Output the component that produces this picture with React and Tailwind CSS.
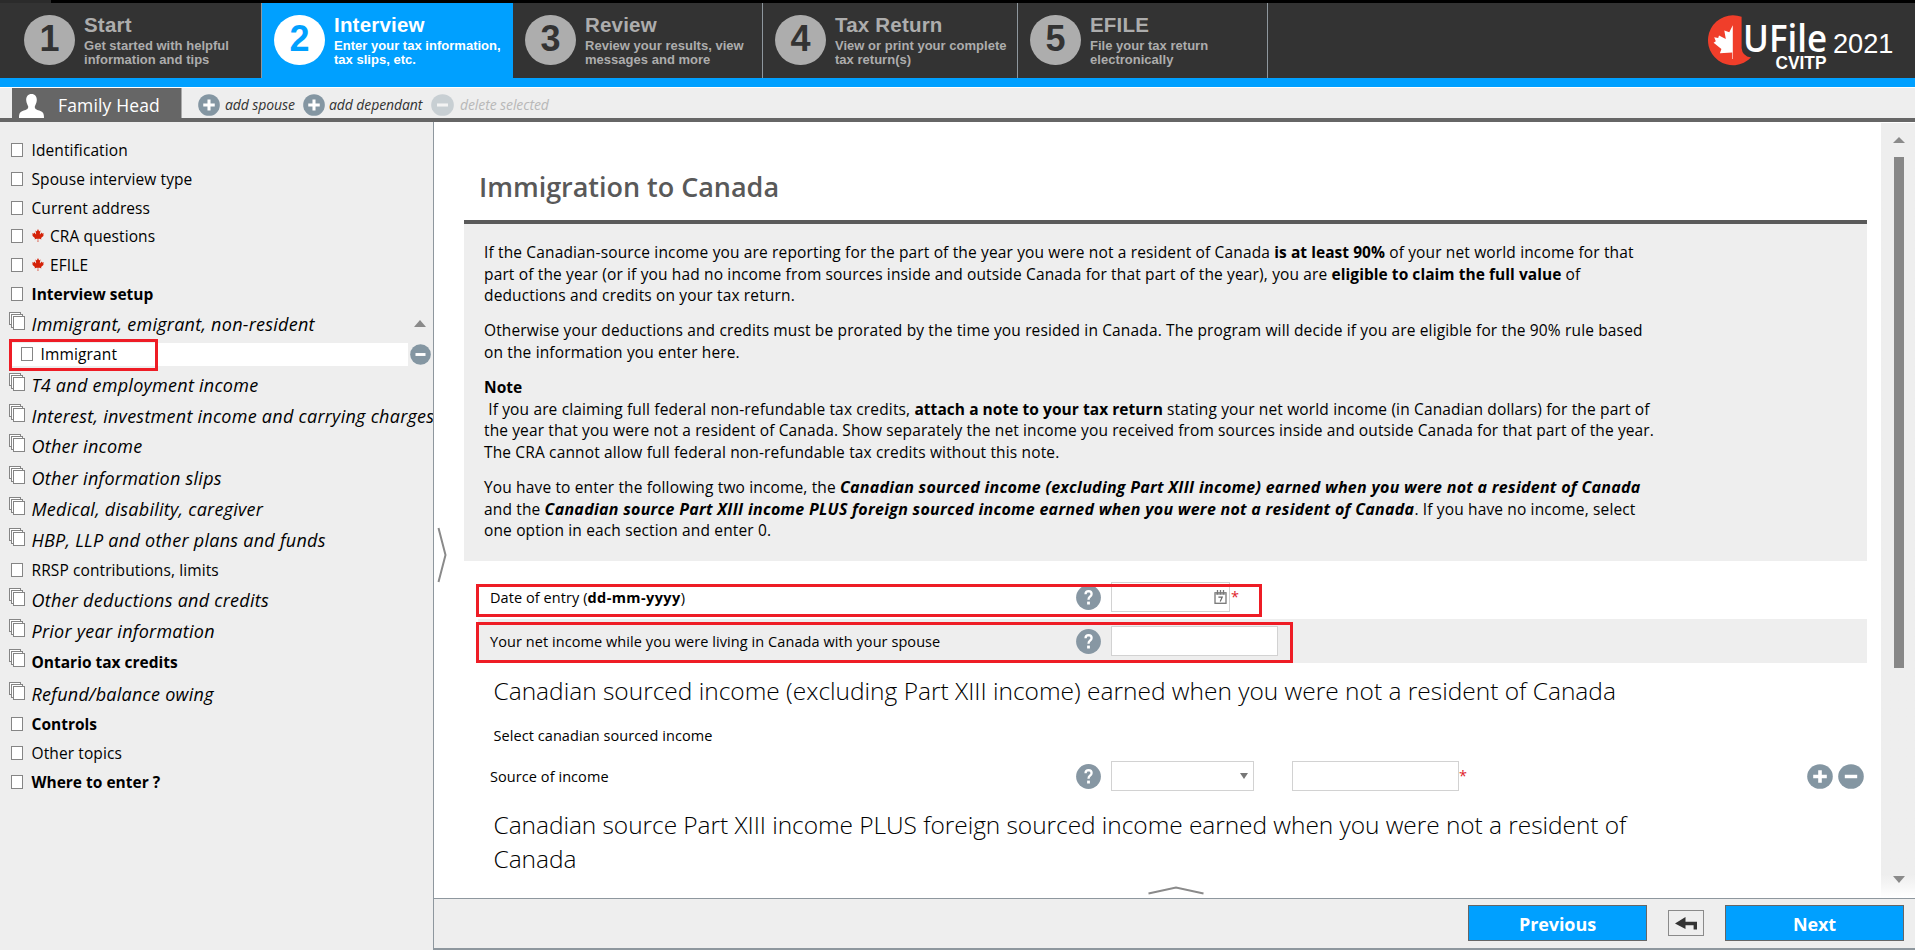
import React from "react";
import { FaCanadianMapleLeaf } from "react-icons/fa";

const steps = [
  { n: 1, title: "Start", lines: ["Get started with helpful", "information and tips"], box: "w-[262px] pl-6" },
  { n: 2, title: "Interview", lines: ["Enter your tax information,", "tax slips, etc."], box: "w-[251px] pl-3", active: true },
  { n: 3, title: "Review", lines: ["Review your results, view", "messages and more"], box: "w-[250px] pl-3" },
  { n: 4, title: "Tax Return", lines: ["View or print your complete", "tax return(s)"], box: "w-[255px] pl-3" },
  { n: 5, title: "EFILE", lines: ["File your tax return", "electronically"], box: "w-[250px] pl-3" },
];

const topics = [
  { label: "Identification", h: "h-[29px]" },
  { label: "Spouse interview type", h: "h-[29px]" },
  { label: "Current address", h: "h-[28px]" },
  { label: "CRA questions", h: "h-[29px]", leaf: true },
  { label: "EFILE", h: "h-[29px]", leaf: true },
  { label: "Interview setup", h: "h-[31px]", bold: true },
  { label: "Immigrant, emigrant, non-resident", h: "h-[29px]", stack: true, italic: true, open: true },
  { label: "Immigrant", h: "h-8", selected: true },
  { label: "T4 and employment income", h: "h-[31px]", stack: true, italic: true },
  { label: "Interest, investment income and carrying charges", h: "h-[30px]", stack: true, italic: true },
  { label: "Other income", h: "h-8", stack: true, italic: true },
  { label: "Other information slips", h: "h-[31px]", stack: true, italic: true },
  { label: "Medical, disability, caregiver", h: "h-[31px]", stack: true, italic: true },
  { label: "HBP, LLP and other plans and funds", h: "h-[29px]", stack: true, italic: true },
  { label: "RRSP contributions, limits", h: "h-[31px]" },
  { label: "Other deductions and credits", h: "h-[31px]", stack: true, italic: true },
  { label: "Prior year information", h: "h-[30px]", stack: true, italic: true },
  { label: "Ontario tax credits", h: "h-[33px]", stack: true, bold: true },
  { label: "Refund/balance owing", h: "h-[29px]", stack: true, italic: true },
  { label: "Controls", h: "h-[29px]", bold: true },
  { label: "Other topics", h: "h-[29px]" },
  { label: "Where to enter ?", h: "h-[29px]", bold: true },
];

function Round({ sign, className }) {
  return (
    <svg viewBox="0 0 26 26" preserveAspectRatio="none" className={"shrink-0 " + className}>
      <circle cx="13" cy="13" r="12.8" fill="#8496a2" />
      <path d={sign === "+" ? "M6.2 13H19.8M13 6.4V19.6" : "M6.8 13H19.2"} stroke="#fff" strokeWidth="3.6" />
    </svg>
  );
}

function Help() {
  return (
    <svg viewBox="0 0 25 25" className="h-[25px] w-[25px] shrink-0">
      <circle cx="12.5" cy="12.5" r="12.4" fill="#8797a3" />
      <path d="M9.5 9.2Q9.6 6.2 12.6 6.2Q15.6 6.3 15.6 9Q15.6 10.6 13.9 11.8Q12.5 12.8 12.5 14.8" fill="none" stroke="#fff" strokeWidth="2.3" />
      <rect x="11.1" y="16.6" width="2.8" height="2.9" fill="#fff" />
    </svg>
  );
}

function DocIcon() {
  return <span className="mt-2 h-[14px] w-3 shrink-0 border border-[#858585] bg-white" />;
}

function StackIcon() {
  return (
    <svg viewBox="0 0 16 18" className="mt-[2px] h-[18px] w-4 shrink-0" fill="#fff" stroke="#858585">
      <rect x="0.5" y="0.5" width="11" height="12" />
      <rect x="2.5" y="2.5" width="11" height="13" />
      <rect x="4.5" y="4.5" width="11" height="13" />
    </svg>
  );
}

function Calendar() {
  return (
    <svg viewBox="0 0 13 14" className="h-[14px] w-[13px]">
      <rect x="1" y="2.8" width="11" height="10.5" fill="#fff" stroke="#777" strokeWidth="1.3" />
      <path d="M1 3.8H12" stroke="#999" strokeWidth="1.8" />
      <path d="M3.5 0V4.4M6.5 0V4.4M9.5 0V4.4" stroke="#777" strokeWidth="1.3" />
      <path d="M4.4 7.2H8.2L6.2 11.6" fill="none" stroke="#666" strokeWidth="1.2" />
    </svg>
  );
}

function Logo() {
  return (
    <svg viewBox="0 0 215 62" className="h-[62px] w-[215px]">
      <path d="M41.6 8.8V40Q42.2 48 51 49.6A25 25 0 1 1 41.6 8.8Z" fill="#f03e2a" />
      <path d="M32.8 17.3L29.3 24.3L24.3 22.6L25.8 31L19 27.4L18.2 30L14.2 29.2L15.8 33.2L13.6 34.7L21.4 41L19.9 45.2L32.2 44.6V51H32.8Z" fill="#fff" />
      <text x="43" y="44.4" fontFamily="Open Sans, sans-serif" fontWeight="600" fontSize="37" textLength="84" lengthAdjust="spacingAndGlyphs" fill="#fff">UFile</text>
      <text x="75.5" y="60.8" fontFamily="Liberation Sans, sans-serif" fontWeight="700" fontSize="17.5" textLength="51" lengthAdjust="spacingAndGlyphs" fill="#fff">CVITP</text>
      <text x="133" y="44.7" fontFamily="Liberation Sans, sans-serif" fontSize="27.2" fill="#fff">2021</text>
    </svg>
  );
}

function Step({ n, title, lines, box, active }) {
  return (
    <div className={`flex shrink-0 border-r pt-3 ${box} ${active ? "border-[#00a0ff] bg-[#00a0ff] text-white" : "border-[#8e979e] text-[#adadad]"}`}>
      <div className={`flex h-[50px] w-[51px] shrink-0 items-center justify-center rounded-full pb-[2px] text-[36px] font-bold ${active ? "bg-white text-[#00a0ff]" : "bg-[#adadad] text-[#333]"}`}>
        {n}
      </div>
      <div className="pl-[9px] font-bold whitespace-nowrap">
        <div className="h-6 text-[20.5px] leading-5 tracking-[0.2px]">{title}</div>
        {lines.map((l) => (
          <div key={l} className="text-[13px] leading-[14px] tracking-[0.02px]">{l}</div>
        ))}
      </div>
    </div>
  );
}

function Topic({ label, h, leaf, bold, italic, stack, open, selected }) {
  if (selected) {
    return (
      <div className={`relative flex ${h}`}>
        <div className="mt-1 ml-[11px] flex h-[23px] w-[397px] bg-white pl-[10px]">
          <span className="mt-1 h-[14px] w-3 border border-[#858585] bg-white" />
          <span className="-mt-1 pl-[7.5px] text-[15.5px] leading-[31px] tracking-[0.15px]">{label}</span>
        </div>
        <Round sign="-" className="mt-[5px] ml-[2px] h-[21px] w-[21px]" />
        <div className="absolute top-0 left-[9px] h-8 w-[149px] border-3 border-[#ee1c25]" />
      </div>
    );
  }
  return (
    <div className={`flex ${h} ${stack ? "pl-[9px]" : "pl-[11px]"}`}>
      {stack ? <StackIcon /> : <DocIcon />}
      {leaf && <FaCanadianMapleLeaf className="mt-2 ml-[8px] h-[13px] w-[14px] shrink-0 text-[#d42208]" />}
      <span
        className={`whitespace-nowrap ${stack ? "pl-[6.5px]" : leaf ? "pl-[5px]" : "pl-[8.5px]"} ${
          italic ? "text-[18px] leading-[28px] tracking-[0.26px] italic" : bold ? "text-[15.5px] leading-[31px] font-bold" : "text-[15.5px] leading-[31px] tracking-[0.1px]"
        }`}
      >
        {label}
      </span>
      {open && (
        <svg viewBox="0 0 12 7" className="mt-[10px] mr-[7px] ml-auto h-[7px] w-3">
          <path d="M0 7L6 0L12 7Z" fill="#8a8a8a" />
        </svg>
      )}
    </div>
  );
}

const B = ({ children }) => <b className="tracking-[0.05px]">{children}</b>;
const BI = ({ children }) => <b className="text-[16px] tracking-[0.28px] italic">{children}</b>;

export default function App() {
  return (
    <div className="flex h-[950px] w-[1915px] flex-col overflow-hidden bg-[#eee] font-['Open_Sans','Noto_Sans',sans-serif] text-black">
      <div className="flex h-[3px] shrink-0 bg-black">
        <div className="w-[51px] bg-[#2b2b2b]" />
      </div>
      <header className="flex h-[75px] shrink-0 bg-[#333] font-['Liberation_Sans',Arial,sans-serif]">
        {steps.map((s) => (
          <Step key={s.n} {...s} />
        ))}
        <div className="ml-auto pt-[5px]">
          <Logo />
        </div>
      </header>
      <div className="h-[9px] shrink-0 bg-[#00a0ff]" />

      <div className="flex h-[35px] shrink-0 border-t border-b-4 border-t-white border-b-[#666] pl-3">
        <div className="flex w-[170px] items-center border-r border-[#aaa] bg-[#666] pl-[7px] text-white">
          <svg viewBox="0 0 25 24" className="mt-[6px] h-6 w-[25px]">
            <path d="M12.5 0C16 0 18 2.6 17.8 6.2C17.6 9.4 16.4 10.6 15.8 12.4C15.6 15 17.6 15.6 20.2 16.6C23.6 17.8 25 18.6 25 24H0C0 18.6 1.4 17.8 4.8 16.6C7.4 15.6 9.4 15 9.2 12.4C8.6 10.6 7.4 9.4 7.2 6.2C7 2.6 9 0 12.5 0Z" fill="#fff" />
          </svg>
          <span className="pt-[5px] pl-[14px] text-[17.5px] tracking-[0.15px]">Family Head</span>
        </div>
        <div className="flex items-center pt-[3px] pl-4 text-[14px] tracking-[-0.1px] text-[#333] italic">
          <Round sign="+" className="h-[22px] w-[22px]" />
          <span className="w-[83px] pl-[5px]">add spouse</span>
          <Round sign="+" className="h-[22px] w-[22px]" />
          <span className="w-[106px] pl-[4px]">add dependant</span>
          <span className="flex items-center text-[#b8b8b8]">
            <Round sign="-" className="h-[22px] w-[23px] opacity-35" />
            <span className="pl-[6px]">delete selected</span>
          </span>
        </div>
      </div>

      <div className="flex h-[828px]">
        <nav className="w-[434px] shrink-0 overflow-hidden border-r border-[#8e979e] pt-[13px]">
          {topics.map((t) => (
            <Topic key={t.label} {...t} />
          ))}
        </nav>

        <div className="flex w-[1481px] flex-col">
          <div className="flex h-[776px]">
            <main className="relative w-[1447px] overflow-hidden bg-white">
              <svg viewBox="0 0 10 56" className="absolute top-[405px] left-[3px] h-14 w-[10px]">
                <path d="M1.5 1L8.5 28L1.5 55" fill="none" stroke="#8a8a8a" strokeWidth="2" />
              </svg>
              <svg viewBox="0 0 56 9" className="absolute top-[764px] left-[714px] h-[9px] w-14">
                <path d="M0.5 7.5L28 1.5L55.5 7.5" fill="none" stroke="#8a8a8a" strokeWidth="2" />
              </svg>

              <h1 className="mt-[47px] pl-[45px] text-[27px] leading-9 font-semibold tracking-[-0.03px] text-[#595959]">Immigration to Canada</h1>
              <section className="mt-[15px] ml-[30px] flex h-[341px] w-[1403px] flex-col gap-[13.6px] border-t-4 border-[#5a5a5a] bg-[#eee] pt-[18px] pl-5 text-[15.5px] leading-[21.6px] tracking-[0.145px] whitespace-nowrap">
                <p>
                  If the Canadian-source income you are reporting for the part of the year you were not a resident of Canada <B>is at least 90%</B> of your net world income for that
                  <br />
                  part of the year (or if you had no income from sources inside and outside Canada for that part of the year), you are <B>eligible to claim the full value</B> of
                  <br />
                  deductions and credits on your tax return.
                </p>
                <p>
                  Otherwise your deductions and credits must be prorated by the time you resided in Canada. The program will decide if you are eligible for the 90% rule based
                  <br />
                  on the information you enter here.
                </p>
                <p>
                  <B>Note</B>
                  <br />
                  &nbsp;If you are claiming full federal non-refundable tax credits, <B>attach a note to your tax return</B> stating your net world income (in Canadian dollars) for the part of
                  <br />
                  <span className="tracking-[0.115px]">
                    the year that you were not a resident of Canada. Show separately the net income you received from sources inside and outside Canada for that part of the year.
                  </span>
                  <br />
                  The CRA cannot allow full federal non-refundable tax credits without this note.
                </p>
                <p>
                  You have to enter the following two income, the <BI>Canadian sourced income (excluding Part XIII income) earned when you were not a resident of Canada</BI>
                  <br />
                  and the <BI>Canadian source Part XIII income PLUS foreign sourced income earned when you were not a resident of Canada</BI>. If you have no income, select
                  <br />
                  one option in each section and enter 0.
                </p>
              </section>

              <div className="ml-11 w-[1389px] pt-[14px] text-[14.5px] leading-5 tracking-[0.07px]">
                <div className="relative flex h-11 items-center pl-3">
                  <span className="w-[586px] pt-[2px]">Date of entry (<b className="tracking-[0.4px]">dd-mm-yyyy</b>)</span>
                  <Help />
                  <div className="ml-[10px] flex h-[30px] w-[119px] items-center justify-end border border-[#d2d2d2] bg-white pr-[2px]">
                    <Calendar />
                  </div>
                  <span className="pl-[1px] text-[#e0202a]">*</span>
                  <div className="absolute top-[9px] -left-[2px] h-[33px] w-[786px] border-3 border-[#ee1c25]" />
                </div>
                <div className="relative flex h-11 items-center bg-[#eee] pl-3">
                  <span className="w-[586px] pt-[2px]">Your net income while you were living in Canada with your spouse</span>
                  <Help />
                  <div className="ml-[10px] h-[30px] w-[167px] border border-[#d2d2d2] bg-white" />
                  <div className="absolute top-[3px] -left-[2px] h-[41px] w-[817px] border-3 border-[#ee1c25]" />
                </div>
                <h2 className="mt-[11px] pl-[15.5px] text-[24.5px] leading-[34px] font-light tracking-[-0.01px]">
                  Canadian sourced income (excluding Part XIII income) earned when you were not a resident of Canada
                </h2>
                <p className="mt-[18px] pl-[15.5px]">Select canadian sourced income</p>
                <div className="mt-2 flex h-11 items-center pl-3">
                  <span className="w-[586px] pt-[1px]">Source of income</span>
                  <Help />
                  <div className="ml-[10px] flex h-[30px] w-[143px] items-center justify-end border border-[#d2d2d2] bg-white pr-[5px]">
                    <svg viewBox="0 0 8 6" className="h-[6px] w-2">
                      <path d="M0 0H8L4 6Z" fill="#777" />
                    </svg>
                  </div>
                  <div className="ml-[38px] h-[30px] w-[167px] border border-[#d2d2d2] bg-white" />
                  <span className="text-[#e0202a]">*</span>
                  <div className="mr-[3px] ml-auto flex gap-[5px]">
                    <Round sign="+" className="h-[25px] w-[26px]" />
                    <Round sign="-" className="h-[25px] w-[26px]" />
                  </div>
                </div>
                <h2 className="mt-[10px] pl-[15.5px] text-[24.5px] leading-[34px] font-light tracking-[-0.06px]">
                  Canadian source Part XIII income PLUS foreign sourced income earned when you were not a resident of
                  <br />
                  Canada
                </h2>
              </div>
            </main>

            <div className="flex w-[34px] flex-col items-center border-t border-white bg-linear-to-b from-[#eee] from-97% to-white pt-[14px] pl-[2px]">
              <svg viewBox="0 0 12 6" className="h-[6px] w-3">
                <path d="M0 6L6 0L12 6Z" fill="#8a8a8a" />
              </svg>
              <div className="mt-[14px] h-[511px] w-[10px] bg-[#878787]" />
              <svg viewBox="0 0 12 7" className="mt-[208px] h-[7px] w-3">
                <path d="M0 0H12L6 7Z" fill="#8a8a8a" />
              </svg>
            </div>
          </div>

          <footer className="flex h-[52px] border-t border-b-2 border-[#8e979e] pt-[6px] pr-[11px]">
            <div className="ml-auto flex h-9 w-[179px] items-center justify-center border border-[#666] bg-[#00a0ff] pt-[3px] text-[18px] font-bold tracking-[-0.1px] text-white">Previous</div>
            <div className="mt-[5px] ml-[21px] flex h-[26px] w-9 items-center justify-center border border-[#8a8a8a]">
              <svg viewBox="0 0 22 13" className="h-[13px] w-[22px]">
                <path d="M0 6.5L10.5 0V4.7H22V12.5H18.6V8.3H10.5V12Z" fill="#333" />
              </svg>
            </div>
            <div className="ml-[21px] flex h-9 w-[179px] items-center justify-center border border-[#666] bg-[#00a0ff] pt-[3px] text-[18px] font-bold tracking-[-0.1px] text-white">Next</div>
          </footer>
        </div>
      </div>
    </div>
  );
}
